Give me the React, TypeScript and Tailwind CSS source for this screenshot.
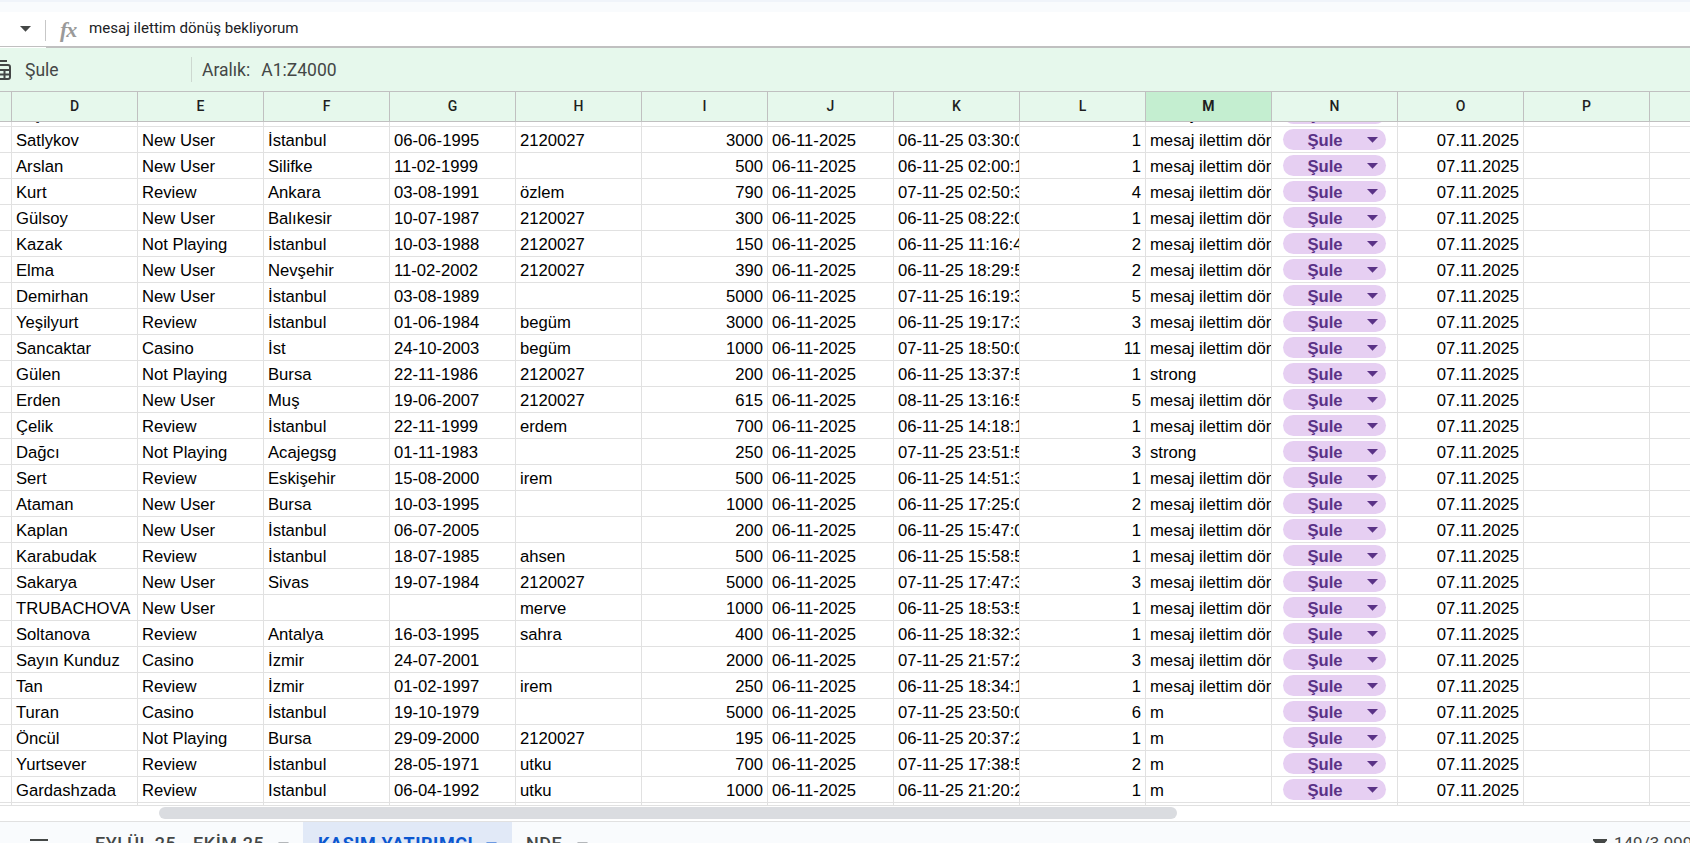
const rows: string[][] = [
  ['Satlykov', 'New User', 'İstanbul', '06-06-1995', '2120027', '3000', '06-11-25 03:30:00', '1', 'mesaj ilettim dönüş bekliyorum'],
  ['Arslan', 'New User', 'Silifke', '11-02-1999', '', '500', '06-11-25 02:00:10', '1', 'mesaj ilettim dönüş bekliyorum'],
  ['Kurt', 'Review', 'Ankara', '03-08-1991', 'özlem', '790', '07-11-25 02:50:30', '4', 'mesaj ilettim dönüş bekliyorum'],
  ['Gülsoy', 'New User', 'Balıkesir', '10-07-1987', '2120027', '300', '06-11-25 08:22:00', '1', 'mesaj ilettim dönüş bekliyorum'],
  ['Kazak', 'Not Playing', 'İstanbul', '10-03-1988', '2120027', '150', '06-11-25 11:16:40', '2', 'mesaj ilettim dönüş bekliyorum'],
  ['Elma', 'New User', 'Nevşehir', '11-02-2002', '2120027', '390', '06-11-25 18:29:50', '2', 'mesaj ilettim dönüş bekliyorum'],
  ['Demirhan', 'New User', 'İstanbul', '03-08-1989', '', '5000', '07-11-25 16:19:30', '5', 'mesaj ilettim dönüş bekliyorum'],
  ['Yeşilyurt', 'Review', 'İstanbul', '01-06-1984', 'begüm', '3000', '06-11-25 19:17:30', '3', 'mesaj ilettim dönüş bekliyorum'],
  ['Sancaktar', 'Casino', 'İst', '24-10-2003', 'begüm', '1000', '07-11-25 18:50:00', '11', 'mesaj ilettim dönüş bekliyorum'],
  ['Gülen', 'Not Playing', 'Bursa', '22-11-1986', '2120027', '200', '06-11-25 13:37:50', '1', 'strong'],
  ['Erden', 'New User', 'Muş', '19-06-2007', '2120027', '615', '08-11-25 13:16:50', '5', 'mesaj ilettim dönüş bekliyorum'],
  ['Çelik', 'Review', 'İstanbul', '22-11-1999', 'erdem', '700', '06-11-25 14:18:10', '1', 'mesaj ilettim dönüş bekliyorum'],
  ['Dağcı', 'Not Playing', 'Acajegsg', '01-11-1983', '', '250', '07-11-25 23:51:50', '3', 'strong'],
  ['Sert', 'Review', 'Eskişehir', '15-08-2000', 'irem', '500', '06-11-25 14:51:30', '1', 'mesaj ilettim dönüş bekliyorum'],
  ['Ataman', 'New User', 'Bursa', '10-03-1995', '', '1000', '06-11-25 17:25:00', '2', 'mesaj ilettim dönüş bekliyorum'],
  ['Kaplan', 'New User', 'İstanbul', '06-07-2005', '', '200', '06-11-25 15:47:00', '1', 'mesaj ilettim dönüş bekliyorum'],
  ['Karabudak', 'Review', 'İstanbul', '18-07-1985', 'ahsen', '500', '06-11-25 15:58:50', '1', 'mesaj ilettim dönüş bekliyorum'],
  ['Sakarya', 'New User', 'Sivas', '19-07-1984', '2120027', '5000', '07-11-25 17:47:30', '3', 'mesaj ilettim dönüş bekliyorum'],
  ['TRUBACHOVA', 'New User', '', '', 'merve', '1000', '06-11-25 18:53:50', '1', 'mesaj ilettim dönüş bekliyorum'],
  ['Soltanova', 'Review', 'Antalya', '16-03-1995', 'sahra', '400', '06-11-25 18:32:30', '1', 'mesaj ilettim dönüş bekliyorum'],
  ['Sayın Kunduz', 'Casino', 'İzmir', '24-07-2001', '', '2000', '07-11-25 21:57:20', '3', 'mesaj ilettim dönüş bekliyorum'],
  ['Tan', 'Review', 'İzmir', '01-02-1997', 'irem', '250', '06-11-25 18:34:10', '1', 'mesaj ilettim dönüş bekliyorum'],
  ['Turan', 'Casino', 'İstanbul', '19-10-1979', '', '5000', '07-11-25 23:50:00', '6', 'm'],
  ['Öncül', 'Not Playing', 'Bursa', '29-09-2000', '2120027', '195', '06-11-25 20:37:20', '1', 'm'],
  ['Yurtsever', 'Review', 'İstanbul', '28-05-1971', 'utku', '700', '07-11-25 17:38:50', '2', 'm'],
  ['Gardashzada', 'Review', 'Istanbul', '06-04-1992', 'utku', '1000', '06-11-25 21:20:20', '1', 'm'],
];

const columns = ['D', 'E', 'F', 'G', 'H', 'I', 'J', 'K', 'L', 'M', 'N', 'O', 'P', ''];

function Caret({ className = '' }: { className?: string }) {
  return (
    <svg className={`shrink-0 ${className}`} width="11" height="6" viewBox="0 0 11 6" fill="currentColor">
      <path d="M0 0h11L5.5 5.7z" />
    </svg>
  );
}

function Cell({ children, right = false }: { children?: React.ReactNode; right?: boolean }) {
  return (
    <div
      className={`h-[26px] w-[126px] shrink-0 overflow-hidden whitespace-nowrap border-b border-r border-[#e1e1e1] px-1 leading-[27px] ${right ? 'text-right' : ''}`}
    >
      {children}
    </div>
  );
}

function Chip() {
  return (
    <div className="ml-[7px] mt-[2px] flex h-[21px] w-[103px] items-center rounded-full bg-[#e6cff2] text-[#5a3286]">
      <span className="w-[84px] pt-[3px] text-center font-bold leading-5">Şule</span>
      <Caret />
    </div>
  );
}

function Row({ data }: { data: string[] }) {
  const [name, status, city, birth, agent, amount, time, count, note] = data;
  return (
    <div className="flex shrink-0">
      <div className="h-[26px] w-3 shrink-0 border-b border-r border-[#e1e1e1]" />
      <Cell>{name}</Cell>
      <Cell>{status}</Cell>
      <Cell>{city}</Cell>
      <Cell>{birth}</Cell>
      <Cell>{agent}</Cell>
      <Cell right>{amount}</Cell>
      <Cell>{time && '06-11-2025'}</Cell>
      <Cell>{time}</Cell>
      <Cell right>{count}</Cell>
      <Cell>{note}</Cell>
      <Cell><Chip /></Cell>
      <Cell right>{time && '07.11.2025'}</Cell>
      <Cell />
      <Cell />
    </div>
  );
}

export default function App() {
  return (
    <div className="flex h-[843px] w-[1690px] flex-col overflow-hidden bg-white font-['Roboto',sans-serif]">
      <div className="h-0.5 shrink-0 bg-[#f0f4fa]" />
      <div className="h-2.5 shrink-0 bg-[#f9fbfd]" />

      {/* formula bar */}
      <div className="flex h-[34px] shrink-0 items-center">
        <Caret className="ml-5 text-[#444746]" />
        <div className="ml-3.5 mt-0.5 h-[21px] w-px bg-[#c7c7c7]" />
        <span className="ml-3.5 w-[29px] font-['Liberation_Serif',serif] text-[22px] font-bold italic tracking-[-1px] text-[#9a9a9a]">fx</span>
        <span className="-mt-0.5 text-[15.1px] text-[#202124]">mesaj ilettim dönüş bekliyorum</span>
      </div>
      <div className="flex h-0.5 shrink-0">
        <div className="h-px w-[46px] bg-[#c0c0c0]" />
        <div className="flex-1 bg-[#c0c0c0]" />
      </div>

      {/* filter view bar */}
      <div className="flex h-[43px] shrink-0 items-center bg-[#e6f8ec] text-[17.5px] text-[#444746]">
        <svg className="-ml-2.5 shrink-0" width="21" height="20" viewBox="0 0 21 20" fill="none" stroke="currentColor" strokeWidth="2">
          <path d="M3 1h14" />
          <rect x="3" y="5" width="17" height="14" rx="2" />
          <path d="M3 10h17M3 14.5h17M9 10v9M14.5 10v9" />
        </svg>
        <span className="ml-3.5 w-[166px] pt-0.5">Şule</span>
        <div className="h-[25px] w-px bg-[#cdd8d0]" />
        <span className="ml-2.5 pt-0.5">Aralık:</span>
        <span className="ml-[11px] pt-0.5">A1:Z4000</span>
      </div>

      <div className="flex h-[31px] shrink-0 border-y border-[#c0c0c0] bg-[#e6f8ec] text-[14px] font-medium text-[#1f1f1f]">
        <div className="w-3 shrink-0 border-r border-[#c0c0c0]" />
        {columns.map((name, i) => (
          <div
            key={i}
            className={`w-[126px] shrink-0 border-r border-[#c0c0c0] text-center leading-[28px] ${name === 'M' ? 'bg-[#c4eed0] font-bold' : ''}`}
          >
            {name}
          </div>
        ))}
      </div>

      <div className="flex h-[683px] shrink-0 flex-col overflow-hidden font-['Liberation_Sans',sans-serif] text-[16.67px] text-black">
        <div className="flex h-[5px] shrink-0 flex-col justify-end overflow-hidden">
          <Row data={['Taş', '', '', '', '', '', '', '', 'mesaj']} />
        </div>
        {rows.map((row) => (
          <Row key={row[0]} data={row} />
        ))}
        <div className="flex h-0.5 shrink-0">
          <div className="w-3 shrink-0 border-r border-[#e1e1e1]" />
          {columns.map((name) => (
            <div key={name} className="w-[126px] shrink-0 border-r border-[#e1e1e1]" />
          ))}
        </div>
      </div>

      <div className="h-4 shrink-0 border-t border-[#e1e1e1] pt-px">
        <div className="ml-[159px] h-3 w-[1018px] rounded-full bg-[#dadce0]" />
      </div>

      {/* sheet tabs */}
      <div className="flex h-11 shrink-0 items-stretch whitespace-nowrap border-t border-[#e1e1e1] bg-[#f9fbfd] text-[18px] font-medium tracking-[0.55px] text-[#444746]">
        <svg className="ml-[30px] mt-[17px] shrink-0" width="18" height="12" viewBox="0 0 18 12" fill="currentColor">
          <path d="M0 0h18v2H0zM0 5h18v2H0zM0 10h18v2H0z" />
        </svg>
        <div className="ml-[47px] flex w-[208px] items-center">
          <span className="w-[183px]">EYLÜL 25 - EKİM 25</span>
          <Caret className="mt-0.5 text-[#b4b7ba]" />
        </div>
        <div className="flex w-[209px] items-center bg-[#e1e9f7] pl-[15px] text-[#0b57d0]">
          <span className="w-[168px] font-bold">KASIM YATIRIMCI</span>
          <Caret className="mt-0.5 text-[#6d9ae2]" />
        </div>
        <div className="flex items-center pl-3.5">
          <span className="w-[51px]">NDE</span>
          <Caret className="mt-0.5 text-[#b4b7ba]" />
        </div>
        <svg className="ml-auto mt-[17px] shrink-0" width="14" height="12" viewBox="0 0 14 12" fill="currentColor">
          <path d="M0 0h14v1.500L9 7v5H5V7L0 1.500z" />
        </svg>
        <span className="flex w-[83px] items-center pl-[7px] text-[17px] font-normal tracking-normal">149/3.999</span>
      </div>
    </div>
  );
}
